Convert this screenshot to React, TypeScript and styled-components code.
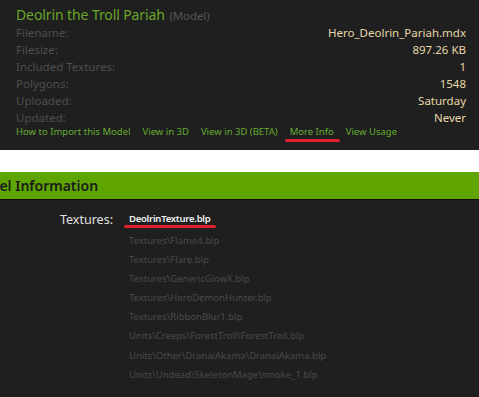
import React from 'react'
import styled, { createGlobalStyle } from 'styled-components'

const GlobalStyle = createGlobalStyle`
  html, body {
    margin: 0;
    padding: 0;
    background: #ffffff;
  }
  body {
    font-family: 'Noto Sans', 'Open Sans', sans-serif;
    width: 479px;
    height: 397px;
    overflow: hidden;
  }
`

const TopPanel = styled.div`
  background: #1f1f1f;
  height: 150px;
  box-sizing: border-box;
  padding: 6px 13px 0 16px;
`

const Title = styled.div`
  color: #6aa728;
  font-size: 14px;
  line-height: 18px;
  height: 18px;
  letter-spacing: -0.1px;

  small {
    color: #555555;
    font-size: 11.5px;
    margin-left: 1px;
  }
`

const InfoGrid = styled.div`
  display: grid;
  grid-template-columns: 1fr auto;
  grid-auto-rows: 17px;
  font-size: 11.5px;
  line-height: 17px;
`

const Label = styled.div`
  color: #4e4e4e;
`

const Value = styled.div`
  color: #e6d7a9;
  text-align: right;
`

const LinkRow = styled.div`
  display: flex;
  gap: 12px;
  font-size: 9.5px;
  line-height: 13px;
  margin-top: -1px;
`

const Link = styled.span<{ $marked?: boolean }>`
  position: relative;
  color: #65ad31;

  &::after {
    content: '';
    display: ${p => (p.$marked ? 'block' : 'none')};
    position: absolute;
    left: -5px;
    right: -6px;
    top: 14px;
    height: 3px;
    border-radius: 2px;
    background: #e0202e;
  }
`

const WhiteGap = styled.div`
  height: 22px;
  background: #ffffff;
`

const SectionHeader = styled.div`
  height: 27px;
  background: #5ea502;
  border-bottom: 1px solid #0a0a0a;
  color: #1b1b1b;
  font-size: 14px;
  font-weight: 600;
  line-height: 28px;
  white-space: nowrap;
  overflow: hidden;
  text-indent: -31px;
`

const Body = styled.div`
  background: #1f1f1f;
  height: 198px;
  display: grid;
  grid-template-columns: 113px 1fr;
  column-gap: 16px;
  padding-top: 11px;
  box-sizing: border-box;
`

const FieldLabel = styled.div`
  color: #e2e2e2;
  font-size: 12.5px;
  line-height: 16px;
  padding-top: 1px;
  text-align: right;
`

const TextureList = styled.div`
  display: flex;
  flex-direction: column;
  font-size: 9.5px;
`

const MainTexture = styled.span`
  position: relative;
  align-self: flex-start;
  color: #f2f2f2;
  font-size: 9.5px;
  font-weight: 600;
  letter-spacing: -0.25px;
  line-height: 16px;
  height: 20px;

  &::after {
    content: '';
    position: absolute;
    left: -5px;
    right: -6px;
    top: 14px;
    height: 3px;
    border-radius: 2px;
    background: #e0202e;
  }
`

const TextureItem = styled.span`
  color: #4a4a4a;
  line-height: 19.1px;
`

const info: [string, string][] = [
  ['Filename:', 'Hero_Deolrin_Pariah.mdx'],
  ['Filesize:', '897.26 KB'],
  ['Included Textures:', '1'],
  ['Polygons:', '1548'],
  ['Uploaded:', 'Saturday'],
  ['Updated:', 'Never']
]

const links = ['How to Import this Model', 'View in 3D', 'View in 3D (BETA)', 'More Info', 'View Usage']

const textures = [
  'Textures\\Flame4.blp',
  'Textures\\Flare.blp',
  'Textures\\GenericGlowX.blp',
  'Textures\\HeroDemonHunter.blp',
  'Textures\\RibbonBlur1.blp',
  'Units\\Creeps\\ForestTroll\\ForestTroll.blp',
  'Units\\Other\\DranaiAkama\\DranaiAkama.blp',
  'Units\\Undead\\SkeletonMage\\smoke_1.blp'
]

export default function App () {
  return (
    <>
      <GlobalStyle />
      <TopPanel>
        <Title>
          Deolrin the Troll Pariah <small>(Model)</small>
        </Title>
        <InfoGrid>
          {info.map(([k, v]) => (
            <React.Fragment key={k}>
              <Label>{k}</Label>
              <Value>{v}</Value>
            </React.Fragment>
          ))}
        </InfoGrid>
        <LinkRow>
          {links.map(l => (
            <Link key={l} $marked={l === 'More Info'}>{l}</Link>
          ))}
        </LinkRow>
      </TopPanel>
      <WhiteGap />
      <SectionHeader>Model Information</SectionHeader>
      <Body>
        <FieldLabel>Textures:</FieldLabel>
        <TextureList>
          <MainTexture>DeolrinTexture.blp</MainTexture>
          {textures.map(t => (
            <TextureItem key={t}>{t}</TextureItem>
          ))}
        </TextureList>
      </Body>
    </>
  )
}
